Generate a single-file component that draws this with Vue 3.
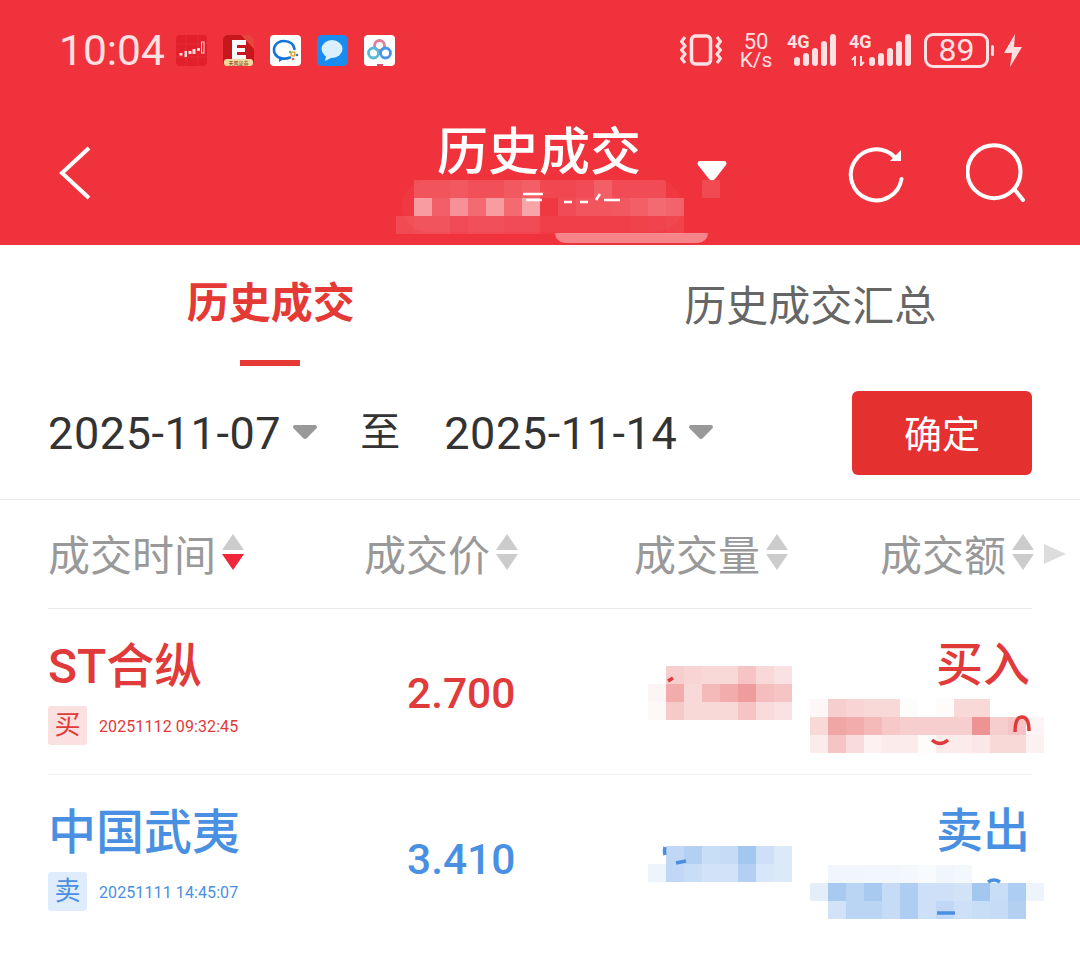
<template>
  <div class="page">
    <header class="top">
      <div class="status">
        <div class="status-left">
          <span class="clock">10:04</span>
          <div class="apps">
            <svg class="app" viewBox="0 0 31 31">
              <rect width="31" height="31" rx="4" fill="#e2202b" />
              <path d="M0 9H31M10 0V31M22 0V31M0 22H31" stroke="#e9383f" stroke-width=".6" />
              <g fill="#ffd9d9">
                <rect x="3.500" y="18" width="3" height="2.500" />
                <rect x="8.500" y="16" width="2.500" height="6" />
                <rect x="12.500" y="16" width="3" height="3" />
                <rect x="16.500" y="14" width="3" height="5" />
                <rect x="21" y="13" width="3" height="3" />
              </g>
              <rect x="25.500" y="7" width="2.500" height="11" fill="none" stroke="#ffd9d9" stroke-width="1" />
            </svg>
            <svg class="app" viewBox="0 0 31 31">
              <rect width="31" height="31" rx="5" fill="#c8161d" />
              <path d="M18 0L31 14V5a5 5 0 0 0-5-5Z" fill="#e6463f" />
              <path d="M9 5H23V10H14V13H22V17H14V20H23V24H9Z" fill="#fff" />
              <rect x="1" y="24" width="29" height="7" rx="3" fill="#f4d8a0" />
              <text x="15.500" y="30" text-anchor="middle" class="app-label">天风证券</text>
            </svg>
            <svg class="app" viewBox="0 0 31 31">
              <rect width="31" height="31" rx="4" fill="#fff" />
              <path d="M20 22.500C15 24.500 8 24 5 19C2 13 6 6 14 6C20 6 24 9.500 24.500 14" fill="none" stroke="#1673d8" stroke-width="2.600" stroke-linecap="round" />
              <path d="M9 22L9 27L15 23.500" fill="#1673d8" />
              <circle cx="23" cy="19" r="2" fill="none" stroke="#f2a52b" stroke-width="1.500" />
              <circle cx="27" cy="20" r="1.300" fill="#2b7fd8" />
              <circle cx="23" cy="24" r="1.300" fill="#e45f3a" />
              <circle cx="20" cy="17" r="1.200" fill="#62b96b" />
            </svg>
            <svg class="app" viewBox="0 0 31 31">
              <rect width="31" height="31" rx="5" fill="#1a8cf0" />
              <ellipse cx="15" cy="14" rx="10.500" ry="9" fill="#d9f0ff" />
              <path d="M9 21L8 26L15 22.500" fill="#d9f0ff" />
            </svg>
            <svg class="app" viewBox="0 0 31 31">
              <rect width="31" height="31" rx="4" fill="#fff" />
              <circle cx="15.500" cy="10.500" r="5" fill="none" stroke="#df7f98" stroke-width="2.800" />
              <circle cx="9.500" cy="18" r="5" fill="none" stroke="#58b9d8" stroke-width="2.800" />
              <circle cx="21.500" cy="18" r="5" fill="none" stroke="#4b95e6" stroke-width="2.800" />
              <path d="M13 30h6" stroke="#d64a6e" stroke-width="2" />
            </svg>
          </div>
        </div>
        <div class="status-right">
          <svg class="vibrate" viewBox="0 0 42 32">
            <rect x="11.500" y="2" width="19" height="28" rx="4" fill="none" stroke="currentColor" stroke-width="3.500" />
            <path d="M5 3L1.500 7.500L5 12L1.500 16L5 20L1.500 24.500L5 29M37 3L40.500 7.500L37 12L40.500 16L37 20L40.500 24.500L37 29" fill="none" stroke="currentColor" stroke-width="3" />
          </svg>
          <div class="speed"><span class="speed-num">50</span><span>K/s</span></div>
          <div class="signal signal-first">
            <span class="net">4G</span>
            <i class="bar b1"></i><i class="bar b2"></i><i class="bar b3"></i><i class="bar b4"></i><i class="bar b5"></i>
          </div>
          <div class="signal signal-second">
            <span class="net">4G</span>
            <svg class="updown" viewBox="0 0 14 10">
              <path d="M4 10V1L1 4M10 0V9L13 6" fill="none" stroke="currentColor" stroke-width="2" />
            </svg>
            <i class="bar b1"></i><i class="bar b2"></i><i class="bar b3"></i><i class="bar b4"></i><i class="bar b5"></i>
          </div>
          <div class="battery"><span>89</span></div>
          <i class="battery-nub"></i>
          <svg class="bolt" viewBox="0 0 18 33">
            <path d="M11 0L0 19H8L6 33L18 13H10Z" fill="currentColor" />
          </svg>
        </div>
      </div>

      <div class="toolbar">
        <svg class="back" viewBox="0 0 32 54">
          <path d="M30 2L3 27L30 52" fill="none" stroke="#fff" stroke-width="4" />
        </svg>
        <h1 class="title">历史成交</h1>
        <svg class="caret" viewBox="0 0 30 20">
          <path d="M3 0H27a2.500 2.500 0 0 1 2 4L18 18a4 4 0 0 1-6 0L1 4A2.500 2.500 0 0 1 3 0Z" fill="#fff" />
        </svg>
        <svg class="refresh" viewBox="0 0 56 56">
          <path d="M46 9.500A25.500 25.500 0 1 0 53.500 32" fill="none" stroke="#fff" stroke-width="4" stroke-linecap="round" />
          <path d="M53 3V14H42Z" fill="#fff" />
        </svg>
        <svg class="search" viewBox="0 0 60 60">
          <circle cx="28" cy="28.700" r="26.500" fill="none" stroke="#fff" stroke-width="4" />
          <path d="M49 47L57 57" stroke="#fff" stroke-width="4" stroke-linecap="round" />
        </svg>
      </div>

      <i class="head-blob"></i>
      <div class="mosaic head-mosaic" :style="gridStyle(headCells)">
        <i v-for="(c, i) in flat(headCells)" :key="i" :style="{ background: `rgba(255,255,255,${c})` }"></i>
      </div>
      <i class="head-patch"></i>
      <i class="head-smear"></i>
      <svg class="head-flecks" viewBox="0 0 300 60">
        <path d="M127 14H147M130 20H146M168 22H176M184 22H192M200 20L204 14M208 20H224" fill="none" stroke="#fff" stroke-width="2.500" />
      </svg>
    </header>

    <nav class="tabs">
      <div class="tab active">历史成交</div>
      <div class="tab">历史成交汇总</div>
    </nav>

    <section class="dates">
      <div class="date">
        2025-11-07
        <svg class="down" viewBox="0 0 24 14"><path d="M2 0H22a2 2 0 0 1 1.500 3.300L14 13a3 3 0 0 1-4 0L.500 3.300A2 2 0 0 1 2 0Z" /></svg>
      </div>
      <span class="to">至</span>
      <div class="date">
        2025-11-14
        <svg class="down" viewBox="0 0 24 14"><path d="M2 0H22a2 2 0 0 1 1.500 3.300L14 13a3 3 0 0 1-4 0L.500 3.300A2 2 0 0 1 2 0Z" /></svg>
      </div>
      <button class="ok">确定</button>
    </section>

    <section class="table">
      <div class="thead cols">
        <div v-for="h in heads" :key="h.label" class="th">
          {{ h.label }}
          <span class="sort">
            <i class="up"></i>
            <i class="dn" :class="{ on: h.on }"></i>
          </span>
        </div>
      </div>
      <i class="more"></i>

      <div v-for="row in rows" :key="row.name" class="row cols" :class="row.side">
        <div class="name-cell">
          <div class="name">{{ row.name }}</div>
          <div class="meta">
            <span class="tag">{{ row.tag }}</span>
            <span class="time">{{ row.time }}</span>
          </div>
        </div>
        <div class="price">{{ row.price }}</div>
        <div></div>
        <div class="action">{{ row.action }}</div>

        <div class="mosaic qty-mosaic" :style="[gridStyle(row.qty), { top: row.qtyTop + 'px' }]">
          <i v-for="(c, i) in flat(row.qty)" :key="i" :style="{ background: tint(row.rgb, c) }"></i>
        </div>
        <div class="mosaic amt-mosaic" :style="gridStyle(row.amt)">
          <i v-for="(c, i) in flat(row.amt)" :key="i" :style="{ background: tint(row.rgb, c) }"></i>
        </div>
        <!-- 打码后露出来的数字残笔 -->
        <svg class="flecks" viewBox="0 0 400 166">
          <path :d="row.flecks" fill="none" stroke="currentColor" stroke-width="3.500" />
        </svg>
      </div>
    </section>
  </div>
</template>

<script setup>
const heads = [
  { label: '成交时间', on: true },
  { label: '成交价' },
  { label: '成交量' },
  { label: '成交额' },
]

// 打码区域的透明度，一行一个数组
const headCells = [
  [0, 0.14, 0.14, 0.16, 0.12, 0.12, 0.16, 0.2, 0.08, 0.08, 0.1, 0.2, 0.1, 0.1, 0.1, 0],
  [0, 0.5, 0.2, 0.45, 0.25, 0.5, 0.25, 0.55, 0, 0.1, 0.15, 0.15, 0.16, 0.2, 0.25, 0.22],
  [0.12, 0.14, 0.14, 0.1, 0.12, 0.12, 0.1, 0.1, 0.04, 0.04, 0.04, 0.04, 0.04, 0.05, 0.06, 0.08],
]

const rows = [
  {
    name: 'ST合纵',
    tag: '买',
    time: '20251112 09:32:45',
    price: '2.700',
    action: '买入',
    side: 'buy',
    rgb: '224,58,58',
    qtyTop: 57,
    flecks: 'M367 123Q367 108 374 108Q381 108 381 122M284 131Q292 138 300 131M20 72L25 69',
    qty: [
      [0, 0.25, 0.22, 0.2, 0.2, 0.3, 0.2, 0.15],
      [0.05, 0.42, 0.2, 0.35, 0.42, 0.5, 0.33, 0.3],
      [0.03, 0.27, 0.2, 0.2, 0.2, 0.3, 0.18, 0.15],
    ],
    amt: [
      [0.04, 0.25, 0.22, 0.2, 0.2, 0.02, 0, 0.02, 0.2, 0.2, 0, 0, 0],
      [0.2, 0.45, 0.42, 0.35, 0.28, 0.25, 0.25, 0.25, 0.25, 0.55, 0.25, 0.3, 0.05],
      [0.1, 0.3, 0.18, 0.07, 0.1, 0.1, 0.02, 0.1, 0.1, 0.12, 0.2, 0.2, 0.08],
    ],
  },
  {
    name: '中国武夷',
    tag: '卖',
    time: '20251111 14:45:07',
    price: '3.410',
    action: '卖出',
    side: 'sell',
    rgb: '74,144,226',
    qtyTop: 71,
    flecks: 'M340 107Q346 103 352 107M289 138H307M17 72Q16 76 17 80M28 88L38 86',
    qty: [
      [0, 0.35, 0.42, 0.3, 0.32, 0.5, 0.28, 0.2],
      [0.1, 0.35, 0.3, 0.25, 0.25, 0.42, 0.22, 0.2],
    ],
    amt: [
      [0, 0.08, 0.08, 0.07, 0.07, 0.06, 0.04, 0.08, 0.06, 0, 0, 0, 0],
      [0.15, 0.48, 0.38, 0.48, 0.32, 0.45, 0.28, 0.28, 0.25, 0.5, 0.3, 0.45, 0.1],
      [0, 0.25, 0.38, 0.38, 0.32, 0.45, 0.28, 0.35, 0.28, 0.3, 0.32, 0.42, 0],
    ],
  },
]

const flat = (cells) => cells.flat()
const gridStyle = (cells) => ({ gridTemplateColumns: `repeat(${cells[0].length}, 18px)` })
const tint = (rgb, a) => `rgba(${rgb},${a})`
</script>

<style scoped>
.page {
  width: 1080px;
  height: 975px;
  background: #fff;
  overflow: hidden;
  font-family: Roboto, "Noto Sans CJK SC", sans-serif;
}
.top {
  position: relative;
  height: 245px;
  background: #f0323c;
}
.status {
  height: 100px;
  padding: 33px 58px 0 59px;
  box-sizing: border-box;
  display: flex;
  justify-content: space-between;
  color: #ffe0e2;
}
.status-left,
.status-right {
  display: flex;
  align-items: flex-start;
}
.clock {
  font-size: 42.500px;
  line-height: 36px;
  width: 117px;
}
.apps {
  display: flex;
  gap: 16px;
  margin-top: 2px;
}
.app {
  width: 31px;
  height: 31px;
}
.app-label {
  font-size: 5px;
  fill: #6b2a10;
  font-family: "Noto Sans CJK SC", sans-serif;
}
.vibrate {
  width: 42px;
  height: 32px;
  margin-top: 1px;
}
.speed {
  width: 34px;
  margin-left: 17px;
  display: flex;
  flex-direction: column;
  align-items: center;
  font-size: 21px;
  line-height: 18px;
}
.speed-num {
  font-size: 22px;
}
.signal {
  position: relative;
  display: flex;
  align-items: flex-end;
  gap: 3px;
  height: 33px;
}
.signal-first {
  margin-left: 14px;
  width: 50px;
  padding-left: 7px;
  box-sizing: border-box;
}
.signal-second {
  margin-left: 12px;
  width: 62px;
  padding-left: 20px;
  gap: 3.500px;
  box-sizing: border-box;
}
.net {
  position: absolute;
  left: 0;
  top: 0;
  font-size: 18px;
  line-height: 18px;
  font-weight: 700;
}
.updown {
  position: absolute;
  left: 2px;
  bottom: 0;
  width: 14px;
  height: 10px;
}
.bar {
  width: 6px;
  border-radius: 3px;
  background: currentColor;
}
.b1 { height: 9px; }
.b2 { height: 13px; }
.b3 { height: 18px; }
.b4 { height: 25px; }
.b5 { height: 32px; }
.battery {
  width: 65px;
  height: 35px;
  margin-left: 13px;
  border: 3px solid currentColor;
  border-radius: 9px;
  box-sizing: border-box;
  display: flex;
  align-items: center;
  justify-content: center;
  font-size: 32px;
  line-height: 29px;
}
.battery-nub {
  width: 3px;
  height: 11px;
  margin: 12px 0 0 2px;
  border-radius: 2px;
  background: currentColor;
}
.bolt {
  width: 18px;
  height: 33px;
  margin: 1px 0 0 10px;
}
.toolbar {
  position: relative;
  height: 145px;
}
.back {
  position: absolute;
  left: 59px;
  top: 46px;
  width: 32px;
  height: 54px;
}
.title {
  margin: 0;
  padding-top: 22px;
  width: 1078px;
  text-align: center;
  color: #fff;
  font-size: 51px;
  line-height: 62px;
  font-weight: 500;
}
.caret {
  position: absolute;
  left: 697px;
  top: 61px;
  width: 30px;
  height: 20px;
}
.refresh {
  position: absolute;
  left: 848px;
  top: 47px;
  width: 56px;
  height: 56px;
}
.search {
  position: absolute;
  left: 966px;
  top: 43px;
  width: 60px;
  height: 60px;
}
.mosaic {
  position: absolute;
  display: grid;
  grid-auto-rows: 18px;
}
.head-mosaic {
  left: 396px;
  top: 180px;
}
.head-blob {
  position: absolute;
  left: 402px;
  top: 180px;
  width: 280px;
  height: 52px;
  border-radius: 26px;
  background: rgba(255, 255, 255, 0.03);
}
.head-patch {
  position: absolute;
  left: 702px;
  top: 180px;
  width: 18px;
  height: 18px;
  background: rgba(255, 255, 255, 0.12);
}
.head-smear {
  position: absolute;
  left: 555px;
  top: 233px;
  width: 153px;
  height: 10px;
  border-radius: 0 0 80px 80px;
  background: rgba(255, 255, 255, 0.4);
}
.head-flecks {
  position: absolute;
  left: 396px;
  top: 180px;
  width: 300px;
  height: 60px;
}
.tabs {
  display: flex;
  height: 121px;
}
.tab {
  position: relative;
  flex: 1;
  text-align: center;
  padding-top: 32px;
  font-size: 42px;
  line-height: 60px;
  color: #666;
}
.tab.active {
  padding: 29px 0 0 1px;
  color: #e53935;
  font-weight: 700;
}
.tab.active::after {
  content: "";
  position: absolute;
  left: 240px;
  bottom: 0;
  width: 60px;
  height: 6px;
  background: #e53935;
}
.dates {
  height: 134px;
  box-sizing: border-box;
  padding: 25px 48px 0;
  border-bottom: 1px solid #e8e8e8;
  display: flex;
  align-items: flex-start;
  color: #333;
}
.date {
  display: flex;
  align-items: center;
  gap: 12px;
  height: 84px;
  font-size: 45px;
  letter-spacing: 0.600px;
}
.down {
  width: 24px;
  height: 14px;
  margin-top: -2px;
  fill: #999;
}
.to {
  height: 84px;
  line-height: 84px;
  margin: 0 44px 0 43px;
  font-size: 40px;
}
.ok {
  width: 180px;
  height: 84px;
  margin-left: auto;
  padding: 0 0 4px;
  border: 0;
  border-radius: 6px;
  background: #e53030;
  color: #fff;
  font-family: inherit;
  font-size: 38px;
}
.table {
  position: relative;
  margin: 0 48px;
}
.cols {
  display: grid;
  grid-template-columns: 316px 270px 246px 152px;
}
.thead {
  height: 109px;
  box-sizing: border-box;
  padding-bottom: 4px;
  border-bottom: 1px solid #e8e8e8;
  align-items: center;
}
.th {
  display: flex;
  align-items: center;
  white-space: nowrap;
  font-size: 42px;
  color: #999;
}
.sort {
  display: flex;
  flex-direction: column;
  gap: 4px;
  margin-left: 6px;
}
.up,
.dn {
  width: 0;
  height: 0;
  border-left: 11px solid transparent;
  border-right: 11px solid transparent;
}
.up {
  border-bottom: 16px solid #ccc;
}
.dn {
  border-top: 16px solid #ccc;
}
.dn.on {
  border-top-color: #f0273a;
}
.more {
  position: absolute;
  right: -34px;
  top: 44px;
  width: 0;
  height: 0;
  border-top: 10px solid transparent;
  border-bottom: 10px solid transparent;
  border-left: 22px solid #ddd;
}
.row {
  position: relative;
  height: 166px;
  box-sizing: border-box;
  border-bottom: 1px solid #eee;
  align-items: start;
}
.row:last-child {
  border-bottom: 0;
}
.buy { color: #e03a3a; }
.sell { color: #4a90e2; }
.name {
  margin-top: 28px;
  font-size: 48px;
  line-height: 60px;
  font-weight: 500;
}
.meta {
  display: flex;
  align-items: center;
  gap: 12px;
  margin-top: 9px;
}
.tag {
  width: 39px;
  height: 39px;
  border-radius: 3px;
  text-align: center;
  font-size: 26px;
  line-height: 39px;
}
.buy .tag { background: #fbe0e0; }
.sell .tag { background: #dfecfb; }
.time {
  font-size: 16px;
  letter-spacing: 0.100px;
  margin-top: 2px;
}
.price {
  padding: 55px 0 0 43px;
  font-size: 42.500px;
  line-height: 60px;
  font-weight: 500;
}
.action {
  margin-top: 26px;
  text-align: right;
  padding-right: 2px;
  font-size: 47px;
  line-height: 60px;
  font-weight: 500;
}
.qty-mosaic {
  left: 600px;
}
.amt-mosaic {
  left: 762px;
  top: 90px;
}
.flecks {
  position: absolute;
  left: 600px;
  top: 0;
  width: 400px;
  height: 166px;
}
</style>
